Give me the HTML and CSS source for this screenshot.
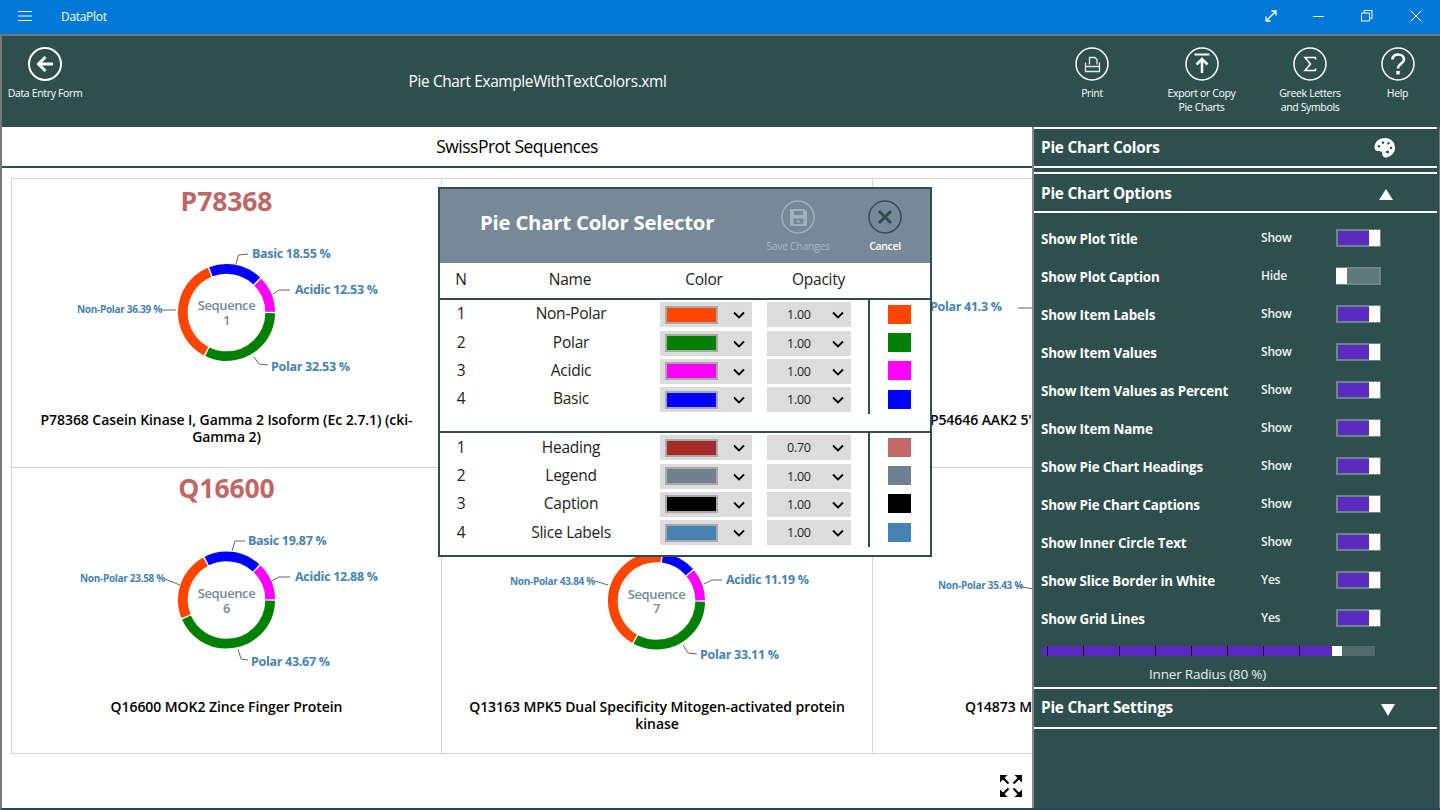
FILE: index.html
```html
<!DOCTYPE html>
<html lang="en">
<head>
<meta charset="utf-8">
<title>DataPlot</title>
<link rel="stylesheet" href="styles.css">
</head>
<body>
<header class="titlebar">
  <svg class="hamburger" width="14" height="10" viewBox="0 0 14 10"><path d="M0 .5h14M0 5h14M0 9.500h14" stroke="#fff" stroke-width="1"/></svg>
  <span class="app-name">DataPlot</span>
  <div class="winctl">
    <svg class="wc wc-expand" width="12" height="12" viewBox="0 0 12 12"><path d="M1.500 10.500L10.500 1.500M6.500 1H11V5.500M1 6.500V11H5.500" fill="none" stroke="#fff" stroke-width="1.300"/></svg>
    <svg class="wc wc-min" width="12" height="12" viewBox="0 0 12 12"><path d="M0 6.500h11" stroke="#fff"/></svg>
    <svg class="wc wc-max" width="12" height="12" viewBox="0 0 12 12"><path d="M.5 3H8.500V11H.5zM3 3V.5H11V8.500H8.500" fill="none" stroke="#fff"/></svg>
    <svg class="wc wc-close" width="12" height="12" viewBox="0 0 12 12"><path d="M.5.5L11.500 11.500M11.500.5L.5 11.500" stroke="#fff"/></svg>
  </div>
</header>
<div class="shell">
  <section class="appbar">
    <div class="abtn abtn-back">
      <svg class="circle" width="34" height="34" viewBox="0 0 34 34"><circle cx="17" cy="17" r="16" fill="none" stroke="#fff" stroke-width="2"/><path d="M17.500 10L10.500 17L17.500 24M11 17H25" fill="none" stroke="#fff" stroke-width="3"/></svg>
      <span>Data Entry Form</span>
    </div>
    <div class="doc-title">Pie Chart ExampleWithTextColors.xml</div>
    <div class="abtn abtn-print">
      <svg class="circle" width="34" height="34" viewBox="0 0 34 34"><circle cx="17" cy="17" r="16" fill="none" stroke="#fff" stroke-width="1.500"/><path d="M14.500 17.500V10.500H20L22 12.500V17.500M10.500 15.500V24.500H24.500V15.500M10.500 19.500H24.500" fill="none" stroke="#e4eaea" stroke-width="1.300"/></svg>
      <span>Print</span>
    </div>
    <div class="abtn abtn-export">
      <svg class="circle" width="34" height="34" viewBox="0 0 34 34"><circle cx="17" cy="17" r="16" fill="none" stroke="#fff" stroke-width="1.500"/><path d="M9.500 7.500H24.500" stroke="#fff" stroke-width="2"/><path d="M17 26V12M11.500 17.500L17 12L22.500 17.500" fill="none" stroke="#fff" stroke-width="2.500"/></svg>
      <span>Export or Copy<br>Pie Charts</span>
    </div>
    <div class="abtn abtn-greek">
      <svg class="circle" width="34" height="34" viewBox="0 0 34 34"><circle cx="17" cy="17" r="16" fill="none" stroke="#fff" stroke-width="1.500"/><path d="M22.500 12.500V10.500H12L17.500 17L12 23.500H22.500V21.500" fill="none" stroke="#fff" stroke-width="1.600"/></svg>
      <span>Greek Letters<br>and Symbols</span>
    </div>
    <div class="abtn abtn-help">
      <svg class="circle" width="34" height="34" viewBox="0 0 34 34"><circle cx="17" cy="17" r="16" fill="none" stroke="#fff" stroke-width="1.500"/><path d="M11.500 12.500C11.500 5.500 23 6 23 12.500C23 16.500 17 16.500 17 21.500" fill="none" stroke="#fff" stroke-width="2.600"/><rect x="15.300" y="24" width="3.400" height="3.400" fill="#fff"/></svg>
      <span>Help</span>
    </div>
  </section>
  <div class="workspace">
    <main class="main">
      <h1 class="main-title">SwissProt Sequences</h1>
      <div class="grid">
        <article class="cell cell-top">
          <h2 class="heading">P78368</h2>
          <svg class="chart" viewBox="12 223 430 175" width="430" height="175">
            <circle class="s-polar" cx="226.500" cy="312.500" r="43.700" pathLength="100" stroke-dasharray="32 100" stroke-dashoffset="-0.250"/>
            <circle class="s-non" cx="226.500" cy="312.500" r="43.700" pathLength="100" stroke-dasharray="35.900 100" stroke-dashoffset="-32.780"/>
            <circle class="s-basic" cx="226.500" cy="312.500" r="43.700" pathLength="100" stroke-dasharray="18 100" stroke-dashoffset="-69.170"/>
            <circle class="s-acid" cx="226.500" cy="312.500" r="43.700" pathLength="100" stroke-dasharray="12 100" stroke-dashoffset="-87.720"/>
            <path class="leader" d="M236 264L238.500 255L248 254M273 294L279 290H290M161 310H176M254 357L259 364L268 365"/>
            <text class="center" x="226.500" y="310">Sequence</text><text class="center" x="226.500" y="325">1</text>
            <text class="lbl" x="252" y="258">Basic 18.55 %</text>
            <text class="lbl" x="295" y="294">Acidic 12.53 %</text>
            <text class="lbl lbl-sm" x="77" y="313">Non-Polar 36.39 %</text>
            <text class="lbl" x="271" y="371">Polar 32.53 %</text>
          </svg>
          <p class="caption">P78368 Casein Kinase I, Gamma 2 Isoform (Ec 2.7.1) (cki-Gamma 2)</p>
        </article>
        <article class="cell cell-top"></article>
        <article class="cell cell-top">
          <h2 class="heading">P54646</h2>
          <svg class="chart" viewBox="873 223 430 175" width="430" height="175">
            <path class="leader" d="M1018 308H1040"/>
            <text class="lbl" x="930" y="311">Polar 41.3 %</text>
          </svg>
          <p class="caption">P54646 AAK2 5'-AMP-Activated Protein Kinase 2</p>
        </article>
        <article class="cell">
          <h2 class="heading">Q16600</h2>
          <svg class="chart" viewBox="12 510 430 175" width="430" height="175">
            <circle class="s-polar" cx="226.500" cy="600" r="43.700" pathLength="100" stroke-dasharray="43.170 100" stroke-dashoffset="-0.250"/>
            <circle class="s-non" cx="226.500" cy="600" r="43.700" pathLength="100" stroke-dasharray="23.080 100" stroke-dashoffset="-43.920"/>
            <circle class="s-basic" cx="226.500" cy="600" r="43.700" pathLength="100" stroke-dasharray="19.370 100" stroke-dashoffset="-67.500"/>
            <circle class="s-acid" cx="226.500" cy="600" r="43.700" pathLength="100" stroke-dasharray="12.380 100" stroke-dashoffset="-87.370"/>
            <path class="leader" d="M232 551L235 541H245M270 582L279 577H290M165 579L180 585M238 649L241 659L248 660"/>
            <text class="center" x="226.500" y="598">Sequence</text><text class="center" x="226.500" y="613">6</text>
            <text class="lbl" x="248" y="545">Basic 19.87 %</text>
            <text class="lbl" x="295" y="581">Acidic 12.88 %</text>
            <text class="lbl lbl-sm" x="80" y="582">Non-Polar 23.58 %</text>
            <text class="lbl" x="251" y="666">Polar 43.67 %</text>
          </svg>
          <p class="caption">Q16600 MOK2 Zince Finger Protein</p>
        </article>
        <article class="cell">
          <h2 class="heading">Q13163</h2>
          <svg class="chart" viewBox="442 510 431 175" width="431" height="175">
            <circle class="s-polar" cx="656.500" cy="601" r="43.700" pathLength="100" stroke-dasharray="32.610 100" stroke-dashoffset="-0.250"/>
            <circle class="s-non" cx="656.500" cy="601" r="43.700" pathLength="100" stroke-dasharray="43.340 100" stroke-dashoffset="-33.360"/>
            <circle class="s-basic" cx="656.500" cy="601" r="43.700" pathLength="100" stroke-dasharray="11.360 100" stroke-dashoffset="-77.200"/>
            <circle class="s-acid" cx="656.500" cy="601" r="43.700" pathLength="100" stroke-dasharray="10.690 100" stroke-dashoffset="-89.060"/>
            <path class="leader" d="M595 581L608 585M704 584L712 580H722M683 645L688 653L697 654"/>
            <text class="center" x="656.500" y="599">Sequence</text><text class="center" x="656.500" y="613">7</text>
            <text class="lbl" x="726" y="584">Acidic 11.19 %</text>
            <text class="lbl lbl-sm" x="510" y="585">Non-Polar 43.84 %</text>
            <text class="lbl" x="700" y="659">Polar 33.11 %</text>
          </svg>
          <p class="caption">Q13163 MPK5 Dual Specificity Mitogen-activated protein kinase</p>
        </article>
        <article class="cell">
          <h2 class="heading">Q14873</h2>
          <svg class="chart" viewBox="873 510 430 175" width="430" height="175">
            <path class="leader" d="M1016 586L1040 590"/>
            <text class="lbl lbl-sm" x="938" y="589">Non-Polar 35.43 %</text>
          </svg>
          <p class="caption">Q14873 MKK7 Dual Specificity Kinase</p>
        </article>
      </div>
      <div class="main-foot">
        <svg width="22" height="22" viewBox="0 0 22 22"><path d="M0 0H7.500L0 7.500zM22 0V7.500L14.500 0zM0 22V14.500L7.500 22zM22 22H14.500L22 14.500z" fill="#000"/><path d="M3 3L8.500 8.500M19 3L13.500 8.500M3 19L8.500 13.500M19 19L13.500 13.500" stroke="#000" stroke-width="2.200"/></svg>
      </div>
    </main>
    <aside class="panel">
      <div class="sec sec-a">
        <span>Pie Chart Colors</span>
        <svg class="sec-icon" width="22" height="20" viewBox="0 0 22 20"><path fill="#fff" fill-rule="evenodd" d="M11 0C5 0 .5 4 .5 9.500C.5 12 2 13 4 13C6 13 7.500 13 8 14.500C8.500 16 8 18 10 19C11 19.500 12.500 20 14 19C19 17 21 13.500 21 9.500C21 4 16.500 0 11 0zM5 7a1.300 1.300 0 1 0 .01 0zM9 3.300a1.300 1.300 0 1 0 .01 0zM14.500 4a1.300 1.300 0 1 0 .01 0zM17 8.500a1.300 1.300 0 1 0 .01 0zM13.500 12.500a1.500 1.500 0 1 0 .01 0z"/></svg>
      </div>
      <div class="sec sec-b">
        <span>Pie Chart Options</span>
        <svg class="sec-tri" width="14" height="11" viewBox="0 0 14 11"><path d="M7 0L14 11H0z" fill="#fff"/></svg>
      </div>
      <div class="opts">
        <div class="opt"><span class="opt-name">Show Plot Title</span><span class="opt-val">Show</span><span class="tog"></span></div>
        <div class="opt"><span class="opt-name">Show Plot Caption</span><span class="opt-val">Hide</span><span class="tog tog-off"></span></div>
        <div class="opt"><span class="opt-name">Show Item Labels</span><span class="opt-val">Show</span><span class="tog"></span></div>
        <div class="opt"><span class="opt-name">Show Item Values</span><span class="opt-val">Show</span><span class="tog"></span></div>
        <div class="opt"><span class="opt-name">Show Item Values as Percent</span><span class="opt-val">Show</span><span class="tog"></span></div>
        <div class="opt"><span class="opt-name">Show Item Name</span><span class="opt-val">Show</span><span class="tog"></span></div>
        <div class="opt"><span class="opt-name">Show Pie Chart Headings</span><span class="opt-val">Show</span><span class="tog"></span></div>
        <div class="opt"><span class="opt-name">Show Pie Chart Captions</span><span class="opt-val">Show</span><span class="tog"></span></div>
        <div class="opt"><span class="opt-name">Show Inner Circle Text</span><span class="opt-val">Show</span><span class="tog"></span></div>
        <div class="opt"><span class="opt-name">Show Slice Border in White</span><span class="opt-val">Yes</span><span class="tog"></span></div>
        <div class="opt"><span class="opt-name">Show Grid Lines</span><span class="opt-val">Yes</span><span class="tog"></span></div>
      </div>
      <div class="slider">
        <div class="track">
          <div class="fill"><i></i><i></i><i></i><i></i><i></i><i></i><i></i><i></i></div>
          <div class="thumb"></div>
        </div>
        <div class="slider-label">Inner Radius (80 %)</div>
      </div>
      <div class="sec sec-c">
        <span>Pie Chart Settings</span>
        <svg class="sec-tri sec-tri-d" width="14" height="12" viewBox="0 0 14 12"><path d="M0 0H14L7 12z" fill="#fff"/></svg>
      </div>
    </aside>
  </div>
</div>

<section class="dialog">
  <div class="dlg-head">
    <h2 class="dlg-title">Pie Chart Color Selector</h2>
    <div class="dbtn dbtn-save">
      <svg width="34" height="34" viewBox="0 0 34 34"><circle cx="17" cy="17" r="16" fill="none" stroke="#a3afbb" stroke-width="1.500"/><path fill="#a3afbb" fill-rule="evenodd" d="M9 9H23L26 12V26H9zM13 11V15H22V11zM12.500 18.500V24H22.500V18.500zM16 20.500H18.500V22.500H16z"/></svg>
      <span>Save Changes</span>
    </div>
    <div class="dbtn dbtn-cancel">
      <svg width="34" height="34" viewBox="0 0 34 34"><circle cx="17" cy="17" r="16" fill="none" stroke="#2f4f4f" stroke-width="1.500"/><path d="M11 11L23 23M23 11L11 23" stroke="#2f4f4f" stroke-width="3"/></svg>
      <span>Cancel</span>
    </div>
  </div>
  <div class="dlg-cols">
    <span>N</span><span>Name</span><span>Color</span><span class="col-op">Opacity</span>
  </div>
  <div class="dlg-sec">
    <div class="drow"><span class="dt">1</span><span class="dt">Non-Polar</span><span class="dd"><b class="c-orange"></b><svg class="chev" viewBox="0 0 12 8"><path d="M1 1.500L6 6.500L11 1.500"/></svg></span><span class="dd dd-op">1.00<svg class="chev" viewBox="0 0 12 8"><path d="M1 1.500L6 6.500L11 1.500"/></svg></span><span class="sw-cell"><i class="sw c-orange"></i></span></div>
    <div class="drow"><span class="dt">2</span><span class="dt">Polar</span><span class="dd"><b class="c-green"></b><svg class="chev" viewBox="0 0 12 8"><path d="M1 1.500L6 6.500L11 1.500"/></svg></span><span class="dd dd-op">1.00<svg class="chev" viewBox="0 0 12 8"><path d="M1 1.500L6 6.500L11 1.500"/></svg></span><span class="sw-cell"><i class="sw c-green"></i></span></div>
    <div class="drow"><span class="dt">3</span><span class="dt">Acidic</span><span class="dd"><b class="c-mag"></b><svg class="chev" viewBox="0 0 12 8"><path d="M1 1.500L6 6.500L11 1.500"/></svg></span><span class="dd dd-op">1.00<svg class="chev" viewBox="0 0 12 8"><path d="M1 1.500L6 6.500L11 1.500"/></svg></span><span class="sw-cell"><i class="sw c-mag"></i></span></div>
    <div class="drow"><span class="dt">4</span><span class="dt">Basic</span><span class="dd"><b class="c-blue"></b><svg class="chev" viewBox="0 0 12 8"><path d="M1 1.500L6 6.500L11 1.500"/></svg></span><span class="dd dd-op">1.00<svg class="chev" viewBox="0 0 12 8"><path d="M1 1.500L6 6.500L11 1.500"/></svg></span><span class="sw-cell"><i class="sw c-blue"></i></span></div>
  </div>
  <div class="dlg-sec dlg-sec-2">
    <div class="drow"><span class="dt2">1</span><span class="dt2">Heading</span><span class="dd"><b class="c-brown"></b><svg class="chev" viewBox="0 0 12 8"><path d="M1 1.500L6 6.500L11 1.500"/></svg></span><span class="dd dd-op">0.70<svg class="chev" viewBox="0 0 12 8"><path d="M1 1.500L6 6.500L11 1.500"/></svg></span><span class="sw-cell"><i class="sw c-brown-a"></i></span></div>
    <div class="drow"><span class="dt2">2</span><span class="dt2">Legend</span><span class="dd"><b class="c-slate"></b><svg class="chev" viewBox="0 0 12 8"><path d="M1 1.500L6 6.500L11 1.500"/></svg></span><span class="dd dd-op">1.00<svg class="chev" viewBox="0 0 12 8"><path d="M1 1.500L6 6.500L11 1.500"/></svg></span><span class="sw-cell"><i class="sw c-slate"></i></span></div>
    <div class="drow"><span class="dt2">3</span><span class="dt2">Caption</span><span class="dd"><b class="c-black"></b><svg class="chev" viewBox="0 0 12 8"><path d="M1 1.500L6 6.500L11 1.500"/></svg></span><span class="dd dd-op">1.00<svg class="chev" viewBox="0 0 12 8"><path d="M1 1.500L6 6.500L11 1.500"/></svg></span><span class="sw-cell"><i class="sw c-black"></i></span></div>
    <div class="drow"><span class="dt2">4</span><span class="dt2">Slice Labels</span><span class="dd"><b class="c-steel"></b><svg class="chev" viewBox="0 0 12 8"><path d="M1 1.500L6 6.500L11 1.500"/></svg></span><span class="dd dd-op">1.00<svg class="chev" viewBox="0 0 12 8"><path d="M1 1.500L6 6.500L11 1.500"/></svg></span><span class="sw-cell"><i class="sw c-steel"></i></span></div>
  </div>
</section>
</body>
</html>
```
FILE: styles.css
```css
* { box-sizing: border-box; }
html, body { margin: 0; height: 100%; }
body {
  width: 1440px; height: 810px; overflow: hidden; position: relative;
  font-family: "Open Sans", "Noto Sans", sans-serif; color: #000; background: #fff;
  display: flex; flex-direction: column;
}
h1, h2, p { margin: 0; font-weight: normal; }

.titlebar {
  height: 36px; flex: none; background: #0078d7; border-bottom: 2px solid #777;
  display: flex; align-items: center; color: #fff;
}
.hamburger { margin: 0 0 2px 18px; }
.app-name { margin: 0 0 2px 29px; font-size: 12px; letter-spacing: -.3px; }
.winctl { margin-left: auto; display: flex; align-items: center; margin-bottom: 2px; }
.wc-expand { margin-right: 36px; }
.wc-min { margin-right: 36px; }
.wc-max { margin-right: 37px; }
.wc-close { margin-right: 18px; }

.shell {
  flex: 1; min-height: 0; display: flex; flex-direction: column;
  border-left: 2px solid #777; border-bottom: 2px solid #1d4a63;
}
.appbar { height: 91px; flex: none; background: #2f4f4f; display: flex; color: #fff; }
.abtn {
  display: flex; flex-direction: column; align-items: center; text-align: center;
  padding-top: 11px; font-size: 10.500px; line-height: 14px; letter-spacing: -.35px; color: #fff;
}
.abtn .circle { margin-bottom: 5px; flex: none; }
.abtn-back { width: 86px; }
.doc-title {
  width: 899px; text-align: center; font-size: 15.400px; letter-spacing: -.35px;
  line-height: 91px; margin-right: 53px;
}
.abtn-print { width: 104px; }
.abtn-export { width: 115px; }
.abtn-greek { width: 102px; }
.abtn-help { width: 73px; }

.workspace { flex: 1; min-height: 0; display: flex; }
.main { width: 1030px; flex: none; overflow: hidden; display: flex; flex-direction: column; }
.main-title {
  height: 41px; flex: none; border-bottom: 2px solid #2f4f4f; text-align: center;
  font-size: 17.500px; line-height: 39px; letter-spacing: -.5px; margin-bottom: 10px;
}
.grid {
  margin-left: 9px; width: 1292px; flex: none;
  display: grid; grid-template-columns: 430px 431px 431px; grid-template-rows: 289px 286px;
  border-bottom: 1px solid #d3d3d3;
}
.cell { border-left: 1px solid #d3d3d3; border-top: 1px solid #d3d3d3; display: flex; flex-direction: column; overflow: hidden; }
.cell-top { padding-top: 2px; }
.heading {
  height: 42px; text-align: center; font-size: 26.500px; line-height: 41px; font-weight: 700;
  color: #bf6767; letter-spacing: -.1px; flex: none;
}
.chart { display: block; flex: none; }
.caption {
  margin-top: 12.500px; padding: 0 20px; text-align: center; font-size: 14px; line-height: 17px;
  font-weight: 600; letter-spacing: -.07px;
}
.main-foot { flex: 1; display: flex; justify-content: flex-end; padding: 21px 10px 0 0; }

circle.s-polar, circle.s-non, circle.s-basic, circle.s-acid { fill: none; stroke-width: 9.700; }
.s-polar { stroke: #008000; }
.s-non { stroke: #ff4500; }
.s-basic { stroke: #0000ff; }
.s-acid { stroke: #ff00ff; }
.leader { fill: none; stroke: #666; stroke-width: 1; }
.center { font-size: 13px; font-weight: 600; fill: #778899; text-anchor: middle; letter-spacing: -.4px; }
.lbl { font-size: 12.500px; font-weight: 700; fill: #4682b4; letter-spacing: -.3px; }
.lbl-sm { font-size: 10px; letter-spacing: -.3px; }

.panel {
  flex: 1; background: #2f4f4f; border-left: 2px solid #888; padding-right: 2px; color: #fff;
  display: flex; flex-direction: column; border-right: 1px solid #777;
}
.sec {
  height: 41px; flex: none; border-top: 2px solid #fff; border-bottom: 2px solid #fff;
  display: flex; align-items: center; padding-left: 7px; font-size: 15.300px; font-weight: 700;
  letter-spacing: -.2px;
}
.sec-a { padding-bottom: 2px; }
.sec-b { margin-top: 4px; }
.sec-c { height: 42px; padding-bottom: 2px; }
.sec-icon { margin-left: auto; margin-right: 41px; margin-top: 2px; }
.sec-tri { margin-left: auto; margin-right: 44px; margin-top: 4px; }
.sec-tri-d { margin-right: 42px; margin-top: 6px; }
.opts { display: flex; flex-direction: column; padding-top: 7px; }
.opt { height: 38px; display: flex; align-items: center; padding-left: 7px; }
.opt-name { width: 220px; font-size: 13.350px; font-weight: 700; letter-spacing: -.15px; }
.opt-val { width: 75px; font-size: 12px; font-weight: 600; letter-spacing: -.2px; margin-top: -3px; color: #f0f4f4; }
.tog {
  width: 45px; height: 18px; border: 2px solid #6e8585; background: #5a2bc0; margin-top: -3px;
  position: relative; display: block;
}
.tog::after { content: ""; position: absolute; right: -1px; top: -1px; bottom: -1px; width: 11px; background: #fff; }
.tog-off { background: #5f7a7a; }
.tog-off::after { right: auto; left: -2px; width: 11px; }
.slider { padding-top: 8px; height: 49px; flex: none; }
.track { margin-left: 8px; width: 333px; height: 10px; background: #4f6b6b; display: flex; }
.fill { width: 290px; height: 10px; background: #5a2bc0; display: flex; padding-left: 5px; }
.fill i { width: 1px; height: 10px; background: #111; margin-right: 35px; flex: none; }
.thumb { width: 10px; height: 10px; background: #fff; }
.slider-label { text-align: center; font-size: 13.500px; line-height: 18px; margin-top: 9px; letter-spacing: -.2px; color: #e8eeee; width: 331px; margin-left: 8px; }

.dialog {
  position: absolute; left: 438px; top: 187px; width: 494px; height: 370px;
  background: #fff; border: 2px solid #2f4f4f; display: flex; flex-direction: column;
}
.dlg-head { height: 74px; flex: none; background: #778899; display: flex; color: #fff; }
.dlg-title { font-size: 20.300px; font-weight: 700; color: #fff; line-height: 66px; margin-left: 40px; width: 290px; letter-spacing: -.2px; white-space: nowrap; }
.dbtn { display: flex; flex-direction: column; align-items: center; font-size: 10.500px; line-height: 14px; padding-top: 11px; letter-spacing: -.35px; }
.dbtn svg { margin-bottom: 5px; flex: none; }
.dbtn-save { width: 70px; color: #a9b5c1; margin-left: -7px; }
.dbtn-cancel { width: 60px; margin-left: 22px; font-weight: 600; }
.dlg-cols {
  height: 37px; flex: none; border-bottom: 2px solid #2f4f4f;
  display: grid; grid-template-columns: 42px 176px 92px 99px; align-items: center; padding-bottom: 4px;
  font-size: 15.500px; text-align: center; letter-spacing: -.25px; color: #222;
}
.col-op { padding-left: 38px; }
.dlg-sec { height: 133px; flex: none; border-bottom: 2px solid #2f4f4f; }
.dlg-sec-2 { border-bottom: 0; }
.drow {
  height: 28.400px; display: grid; grid-template-columns: 42px 178px 92px 99px 1fr; align-items: center;
  font-size: 15.500px; letter-spacing: -.25px; text-align: center; color: #222;
}
.dt { margin-top: -2px; }
.dt2 { margin-top: -1px; }
.dd {
  height: 25px; width: 92px; background: #dcdcdc; display: flex; align-items: center; position: relative; margin-top: 1px;
}
.dd b { display: block; width: 53px; height: 18px; margin-left: 5px; border: 2px solid #a9a9a9; }
.chev { position: absolute; right: 7px; top: 9px; width: 12px; height: 8px; fill: none; stroke: #000; stroke-width: 1.800; }
.dd-op { width: 84px; justify-self: end; font-size: 12.500px; padding-left: 20px; letter-spacing: -.25px; }
.sw-cell {
  height: 100%; margin-left: 17px; border-left: 2px solid #2f4f4f; padding-left: 18px; display: flex; align-items: center;
}
.sw { display: block; width: 23px; height: 19px; }
.c-orange { background: #ff4500; }
.c-green { background: #008000; }
.c-mag { background: #ff00ff; }
.c-blue { background: #0000ff; }
.c-brown { background: #a52a2a; }
.c-brown-a { background: #c06a6a; }
.c-slate { background: #708090; }
.c-black { background: #000; }
.c-steel { background: #4682b4; }
```
